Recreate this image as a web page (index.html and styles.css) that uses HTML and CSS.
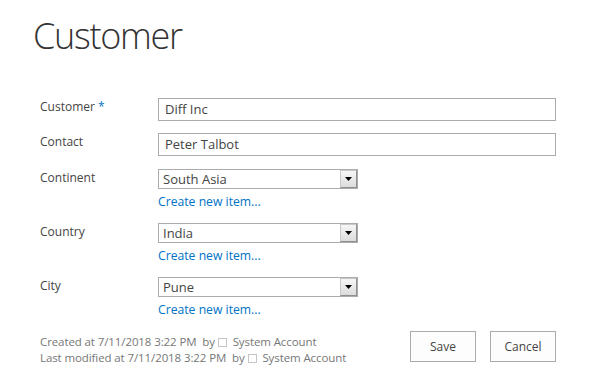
FILE: index.html
```html
<!DOCTYPE html>
<html>
<head>
<meta charset="utf-8">
<link rel="stylesheet" href="styles.css">
</head>
<body>
<div class="page">
  <h1 class="title">Customer</h1>
  <div class="form">
    <div class="row row-text">
      <div class="label">Customer <span class="req">*</span></div>
      <div class="field"><div class="input">Diff Inc</div></div>
    </div>
    <div class="row row-text">
      <div class="label">Contact</div>
      <div class="field"><div class="input">Peter Talbot</div></div>
    </div>
    <div class="row row-lookup">
      <div class="label">Continent</div>
      <div class="field">
        <div class="select"><span class="value">South Asia</span><span class="arrow"><svg width="7" height="4" viewBox="0 0 7 4"><path d="M0 0H7L3.5 4Z" fill="#000"/></svg></span></div>
        <a class="link" href="#">Create new item...</a>
      </div>
    </div>
    <div class="row row-lookup">
      <div class="label">Country</div>
      <div class="field">
        <div class="select"><span class="value">India</span><span class="arrow"><svg width="7" height="4" viewBox="0 0 7 4"><path d="M0 0H7L3.5 4Z" fill="#000"/></svg></span></div>
        <a class="link" href="#">Create new item...</a>
      </div>
    </div>
    <div class="row row-lookup">
      <div class="label">City</div>
      <div class="field">
        <div class="select"><span class="value">Pune</span><span class="arrow"><svg width="7" height="4" viewBox="0 0 7 4"><path d="M0 0H7L3.5 4Z" fill="#000"/></svg></span></div>
        <a class="link" href="#">Create new item...</a>
      </div>
    </div>
    <div class="footer">
      <div class="meta">
        <div>Created at 7/11/2018 3:22 PM&nbsp; by<span class="box"></span>&nbsp; System Account</div>
        <div>Last modified at 7/11/2018 3:22 PM&nbsp; by<span class="box"></span>&nbsp; System Account</div>
      </div>
      <div class="buttons">
        <button class="btn">Save</button>
        <button class="btn">Cancel</button>
      </div>
    </div>
  </div>
</div>
</body>
</html>
```
FILE: styles.css
```css
* { box-sizing: border-box; }
body {
  margin: 0;
  background: #fff;
  font-family: "Open Sans", "Segoe UI", sans-serif;
  font-size: 12px;
  color: #444;
}
.page {
  padding: 0 0 0 40px;
  width: 556px;
}
.title {
  margin: 11px 0 0 -7px;
  font-weight: 300;
  font-size: 36px;
  line-height: 50px;
  color: #333;
  letter-spacing: -1.3px;
}
.form {
  margin-top: 37px;
}
.row {
  display: flex;
}
.label {
  width: 118px;
  flex: none;
  line-height: 16px;
  padding-top: 1px;
}
.req { color: #0072c6; }
.field { flex: 1; display: flex; flex-direction: column; }
.row-text { height: 23px; margin-bottom: 12px; }
.row-text + .row-text { margin-bottom: 13px; }
.input {
  height: 23px;
  border: 1px solid #ababab;
  padding: 0 6px;
  line-height: 21px;
  font-size: 13px;
}
.row-lookup { margin-bottom: 13px; }
.select {
  width: 200px;
  height: 20px;
  border: 1px solid #ababab;
  display: flex;
  align-items: stretch;
  justify-content: space-between;
  padding-left: 4px;
  font-size: 13px;
  line-height: 18px;
}
.arrow {
  width: 17px;
  border: 1px solid #8f8f8f;
  border-top-color: #c8c8c8;
  border-left-color: #c8c8c8;
  background: linear-gradient(#f6f6f6, #dcdcdc);
  display: flex;
  align-items: center;
  justify-content: center;
}
.arrow svg { display: block; }
.link {
  margin-top: 4px;
  line-height: 17px;
  color: #0072c6;
  text-decoration: none;
  font-size: 12.2px;
}
.footer {
  display: flex;
  justify-content: space-between;
  align-items: flex-start;
  margin-top: 8px;
}
.meta {
  color: #777;
  font-size: 11.5px;
  letter-spacing: -0.1px;
  line-height: 16px;
  padding-top: 3px;
}
.box {
  display: inline-block;
  width: 9px;
  height: 9px;
  border: 1px solid #c6c6c6;
  margin-left: 3px;
  vertical-align: -1px;
}
.buttons {
  display: flex;
  gap: 14px;
}
.btn {
  width: 66px;
  height: 31px;
  border: 1px solid #ababab;
  background: #fdfdfd;
  font-family: inherit;
  font-size: 12px;
  color: #444;
  padding: 0;
}
```
